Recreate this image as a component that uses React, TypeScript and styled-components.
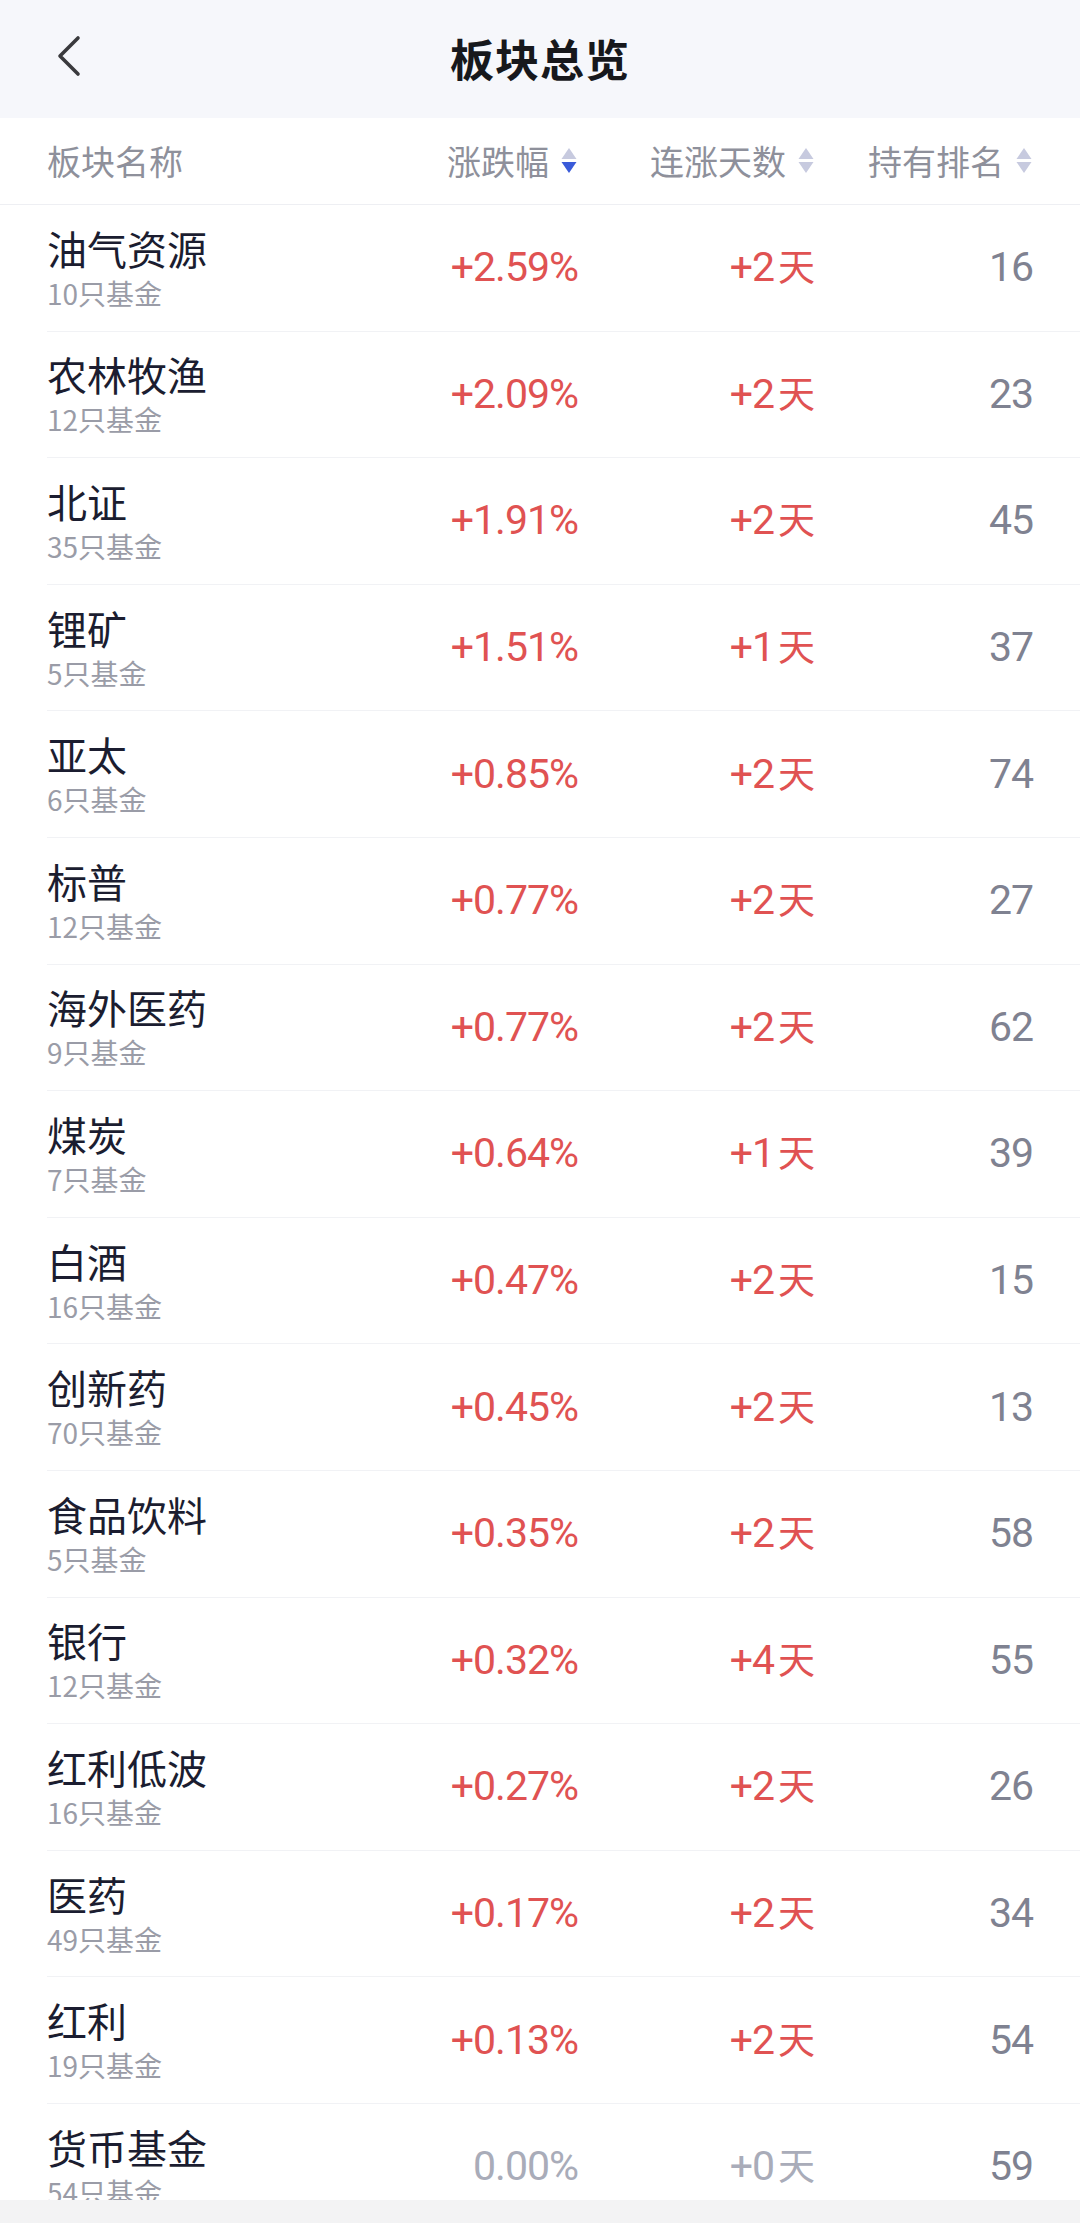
import styled, { createGlobalStyle } from "styled-components";

const GlobalStyle = createGlobalStyle`
  html, body {
    margin: 0;
    padding: 0;
    background: #ffffff;
  }
  * {
    box-sizing: border-box;
  }
`;

const Page = styled.div`
  width: 1080px;
  height: 2223px;
  display: flex;
  flex-direction: column;
  overflow: hidden;
  font-family: "Noto Sans CJK SC", "Noto Sans", sans-serif;
  background: #ffffff;
`;

const TopBar = styled.div`
  position: relative;
  flex: 0 0 118px;
  display: flex;
  align-items: center;
  justify-content: center;
  background: #f6f7fb;
`;

const BackBtn = styled.div`
  position: absolute;
  left: 50px;
  top: 30px;
  width: 40px;
  height: 52px;
  display: flex;
  align-items: center;
  justify-content: center;
`;

const Title = styled.div`
  font-size: 44px;
  font-weight: 700;
  color: #17181c;
  letter-spacing: 1px;
  margin-top: -2px;
`;

const Table = styled.div`
  flex: 1;
  overflow: hidden;
`;

const Cols = `
  display: grid;
  grid-template-columns: 1fr 200px 237px 218px;
  align-items: center;
`;

const HeadRow = styled.div`
  ${Cols};
  height: 87px;
  padding: 0 47px;
  border-bottom: 1.5px solid #eeeff3;
`;

const HeadCell = styled.div<{ align?: "left" | "right" }>`
  display: flex;
  align-items: center;
  justify-content: ${(p) => (p.align === "left" ? "flex-start" : "flex-end")};
  gap: 11px;
  font-size: 34px;
  color: #8e909b;
  line-height: 1;
`;

const Row = styled.div`
  ${Cols};
  height: 126.6px;
  margin-left: 47px;
  padding-right: 47px;
  border-bottom: 1.5px solid #f1f2f5;
`;

const NameCell = styled.div`
  display: flex;
  flex-direction: column;
`;

const Name = styled.div`
  font-size: 40px;
  line-height: 50px;
  color: #1b1d30;
`;

const Sub = styled.div`
  font-size: 28px;
  line-height: 40px;
  color: #9a9ca7;
`;

const Num = styled.div<{ tone: "up" | "flat" | "rank" }>`
  text-align: right;
  font-family: Roboto, "Noto Sans CJK SC", sans-serif;
  font-size: 41px;
  letter-spacing: -1px;
  line-height: 1;
  color: ${(p) =>
    p.tone === "up" ? "#e05252" : p.tone === "flat" ? "#a9acb9" : "#7f8291"};
`;

const Day = styled.span`
  font-family: "Noto Sans CJK SC", sans-serif;
  font-size: 37px;
  margin-left: 4px;
  letter-spacing: 0;
`;

const BottomBar = styled.div`
  flex: 0 0 23px;
  background: #f3f3f4;
`;

function SortIcon({ active }: { active?: boolean }) {
  return (
    <svg width="18" height="30" viewBox="0 0 18 30">
      <polygon points="9,2 16.5,13 1.5,13" fill="#c7cadf" />
      <polygon points="1.5,16 16.5,16 9,27" fill={active ? "#3a5bd9" : "#c7cadf"} />
    </svg>
  );
}

type Item = {
  name: string;
  count: number;
  pct: string;
  days: string;
  rank: number;
};

const items: Item[] = [
  { name: "油气资源", count: 10, pct: "+2.59%", days: "+2", rank: 16 },
  { name: "农林牧渔", count: 12, pct: "+2.09%", days: "+2", rank: 23 },
  { name: "北证", count: 35, pct: "+1.91%", days: "+2", rank: 45 },
  { name: "锂矿", count: 5, pct: "+1.51%", days: "+1", rank: 37 },
  { name: "亚太", count: 6, pct: "+0.85%", days: "+2", rank: 74 },
  { name: "标普", count: 12, pct: "+0.77%", days: "+2", rank: 27 },
  { name: "海外医药", count: 9, pct: "+0.77%", days: "+2", rank: 62 },
  { name: "煤炭", count: 7, pct: "+0.64%", days: "+1", rank: 39 },
  { name: "白酒", count: 16, pct: "+0.47%", days: "+2", rank: 15 },
  { name: "创新药", count: 70, pct: "+0.45%", days: "+2", rank: 13 },
  { name: "食品饮料", count: 5, pct: "+0.35%", days: "+2", rank: 58 },
  { name: "银行", count: 12, pct: "+0.32%", days: "+4", rank: 55 },
  { name: "红利低波", count: 16, pct: "+0.27%", days: "+2", rank: 26 },
  { name: "医药", count: 49, pct: "+0.17%", days: "+2", rank: 34 },
  { name: "红利", count: 19, pct: "+0.13%", days: "+2", rank: 54 },
  { name: "货币基金", count: 54, pct: "0.00%", days: "+0", rank: 59 },
];

export default function App() {
  return (
    <Page>
      <GlobalStyle />
      <TopBar>
        <BackBtn>
          <svg width="30" height="44" viewBox="0 0 30 44">
            <polyline
              points="23,4 5,22 23,40"
              fill="none"
              stroke="#3a3a3d"
              strokeWidth="3.6"
              strokeLinecap="round"
              strokeLinejoin="round"
            />
          </svg>
        </BackBtn>
        <Title>板块总览</Title>
      </TopBar>
      <Table>
        <HeadRow>
          <HeadCell align="left">板块名称</HeadCell>
          <HeadCell>
            涨跌幅
            <SortIcon active />
          </HeadCell>
          <HeadCell>
            连涨天数
            <SortIcon />
          </HeadCell>
          <HeadCell>
            持有排名
            <SortIcon />
          </HeadCell>
        </HeadRow>
        {items.map((it) => {
          const flat = it.pct.startsWith("0");
          return (
            <Row key={it.name}>
              <NameCell>
                <Name>{it.name}</Name>
                <Sub>{it.count}只基金</Sub>
              </NameCell>
              <Num tone={flat ? "flat" : "up"}>{it.pct}</Num>
              <Num tone={flat ? "flat" : "up"}>
                {it.days}
                <Day>天</Day>
              </Num>
              <Num tone="rank">{it.rank}</Num>
            </Row>
          );
        })}
      </Table>
      <BottomBar />
    </Page>
  );
}
